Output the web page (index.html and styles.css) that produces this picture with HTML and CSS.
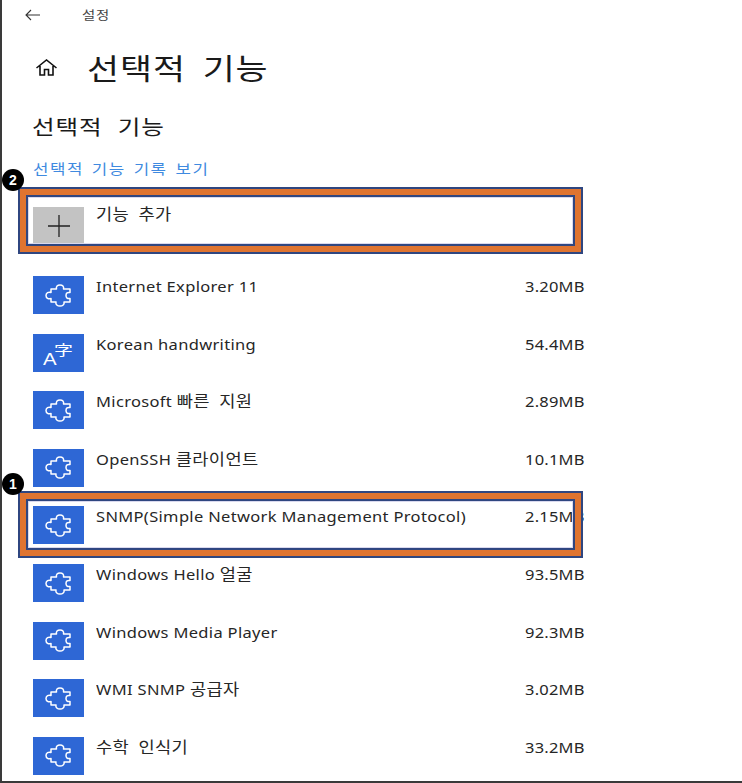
FILE: index.html
```html
<!DOCTYPE html>
<html lang="ko">
<head>
<meta charset="utf-8">
<title>선택적 기능</title>
<link rel="stylesheet" href="styles.css">
</head>
<body>
<svg class="defs" width="0" height="0" aria-hidden="true">
  <symbol id="puzzle" viewBox="0 0 27 23">
    <path d="M6 5H11.500C10.800 2.500 12.500 1 15 1S19.200 2.500 18.500 5H25V8.500C22.500 8 21 9.200 21 11.500S22.500 15 25 14.500V18H19C19.700 20.500 17.500 22 15 22S10.300 20.500 11 18H6V14.500C3.500 15.500 1 14 1 11.500S3.500 7.500 6 8.500Z" fill="none" stroke="#fff" stroke-width="1.500" stroke-linejoin="round"/>
  </symbol>
</svg>
<div class="page">
  <header class="topbar">
    <svg class="back" viewBox="0 0 15 12" width="15" height="12"><path d="M15 6H1M6 1 1 6l5 5" fill="none" stroke="#333" stroke-width="1.100"/></svg>
    <span class="crumb">설정</span>
  </header>
  <div class="title-row">
    <svg class="home" viewBox="0 0 23 17" width="23" height="17"><path d="M1.500 9 11.500 1l10 8M5 7v9h4.500v-5.500h4V16H18V7" fill="none" stroke="#111" stroke-width="1.600"/></svg>
    <h1>선택적 기능</h1>
  </div>
  <h2>선택적 기능</h2>
  <a class="history" href="#">선택적 기능 기록 보기</a>

  <div class="add-row">
    <span class="tile tile-add"><svg viewBox="0 0 22 22" width="22" height="22"><path d="M0 11H22M11 0V22" stroke="#222" stroke-width="1.300"/></svg></span>
    <span class="name name-add"><span class="ko">기능 추가</span></span>
    <span class="highlight"></span>
    <span class="badge">2</span>
  </div>

  <ul class="list">
    <li class="row"><span class="tile"><svg class="pz"><use href="#puzzle"/></svg></span><span class="name">Internet Explorer 11</span><span class="size">3.20MB</span></li>
    <li class="row"><span class="tile"><span class="lang-a">A</span><span class="lang-z">字</span></span><span class="name">Korean handwriting</span><span class="size">54.4MB</span></li>
    <li class="row"><span class="tile"><svg class="pz"><use href="#puzzle"/></svg></span><span class="name">Microsoft <span class="ko">빠른 지원</span></span><span class="size">2.89MB</span></li>
    <li class="row"><span class="tile"><svg class="pz"><use href="#puzzle"/></svg></span><span class="name">OpenSSH <span class="ko">클라이언트</span></span><span class="size">10.1MB</span></li>
    <li class="row"><span class="tile"><svg class="pz"><use href="#puzzle"/></svg></span><span class="name">SNMP(Simple Network Management Protocol)</span><span class="size">2.15MB</span><span class="highlight highlight-snmp"></span><span class="badge badge-snmp">1</span></li>
    <li class="row"><span class="tile"><svg class="pz"><use href="#puzzle"/></svg></span><span class="name">Windows Hello <span class="ko">얼굴</span></span><span class="size">93.5MB</span></li>
    <li class="row"><span class="tile"><svg class="pz"><use href="#puzzle"/></svg></span><span class="name">Windows Media Player</span><span class="size">92.3MB</span></li>
    <li class="row"><span class="tile"><svg class="pz"><use href="#puzzle"/></svg></span><span class="name">WMI SNMP <span class="ko">공급자</span></span><span class="size">3.02MB</span></li>
    <li class="row"><span class="tile"><svg class="pz"><use href="#puzzle"/></svg></span><span class="name"><span class="ko">수학 인식기</span></span><span class="size">33.2MB</span></li>
  </ul>
</div>
</body>
</html>
```
FILE: styles.css
```css
* { box-sizing: border-box; }
html, body { margin: 0; padding: 0; background: #fff; }
body {
  font-family: "Noto Sans", "Noto Sans CJK KR", sans-serif;
  color: #262626;
}
.defs { position: absolute; }
.page {
  width: 742px;
  height: 783px;
  overflow: hidden;
  border-left: 2px solid #3a3a3a;
  border-bottom: 2px solid #3a3a3a;
  padding-left: 31px;
}
.topbar {
  display: flex;
  align-items: center;
  height: 30px;
}
.back { margin-left: -8px; }
.crumb {
  margin-left: 42px;
  font-size: 12px;
  letter-spacing: 0.600px;
  color: #444;
  transform: scaleX(1.2);
  transform-origin: left center;
}
.title-row {
  display: flex;
  align-items: center;
  height: 74px;
}
.home { margin-left: 2px; }
h1 {
  margin: 0 0 0 29px;
  font: 400 29px/40px "Noto Sans CJK KR", sans-serif;
  letter-spacing: 0.800px;
  word-spacing: 5px;
  color: #1a1a1a;
  transform: scaleX(1.2);
  transform-origin: left center;
}
h2 {
  margin: 0 0 0 -1px;
  height: 44px;
  font: 400 20.500px/44px "Noto Sans CJK KR", sans-serif;
  letter-spacing: 0.700px;
  word-spacing: 6.300px;
  color: #1a1a1a;
  transform: scaleX(1.2);
  transform-origin: left center;
}
.history {
  display: block;
  margin-top: 10px;
  height: 46px;
  font: 400 14px/20px "Noto Sans CJK KR", sans-serif;
  letter-spacing: 1.250px;
  word-spacing: 1.450px;
  color: #3f8ae0;
  text-decoration: none;
  transform: scaleX(1.2);
  transform-origin: left center;
}
.add-row {
  position: relative;
  display: flex;
  height: 71px;
  padding-top: 2px;
  margin-top: 1px;
}
.list { margin: 0; padding: 0; list-style: none; }
.row {
  position: relative;
  display: flex;
  height: 57.620px;
}
.tile {
  flex: none;
  display: flex;
  align-items: center;
  justify-content: center;
  position: relative;
  width: 51px;
  height: 38px;
  background: #2e67d5;
}
.tile-add { background: #c3c3c3; }
.pz { width: 27px; height: 23px; }
.name {
  margin-left: 12px;
  font-size: 15px;
  line-height: 20px;
  letter-spacing: 0.300px;
  white-space: nowrap;
  transform: scaleX(1.1);
  transform-origin: left center;
}
.name-add { margin-top: -3px; }
.ko { font-size: 16px; letter-spacing: 0.300px; word-spacing: 4.200px; }
.size {
  position: absolute;
  left: 492px;
  top: 0;
  font-size: 15px;
  line-height: 20px;
  letter-spacing: 0.200px;
  transform: scaleX(1.1);
  transform-origin: left center;
}
.lang-a, .lang-z { position: absolute; color: #fff; }
.lang-a {
  left: 10px;
  top: 14px;
  font: 400 17px/24px "Liberation Sans", sans-serif;
  transform: scaleX(1.2);
  transform-origin: left center;
}
.lang-z {
  left: 21px;
  top: 3px;
  font: 400 14px/24px "Noto Sans CJK SC", sans-serif;
  transform: scaleX(1.35);
  transform-origin: left center;
}
.highlight {
  position: absolute;
  left: -15px;
  top: -18px;
  width: 565px;
  height: 67px;
  background: transparent;
  border: 2px solid #2f4680;
  box-shadow: inset 0 0 0 6px #df7430, inset 0 0 0 8px #2f4680, inset 0 0 0 9px #d9d9ee;
}
.highlight-snmp { top: -15px; }
.badge {
  position: absolute;
  left: -31px;
  top: -36px;
  width: 22px;
  height: 22px;
  border-radius: 50%;
  background: #000;
  color: #fff;
  font: 700 14px/22px "Liberation Sans", sans-serif;
  text-align: center;
}
.badge-snmp { top: -33px; }
```
